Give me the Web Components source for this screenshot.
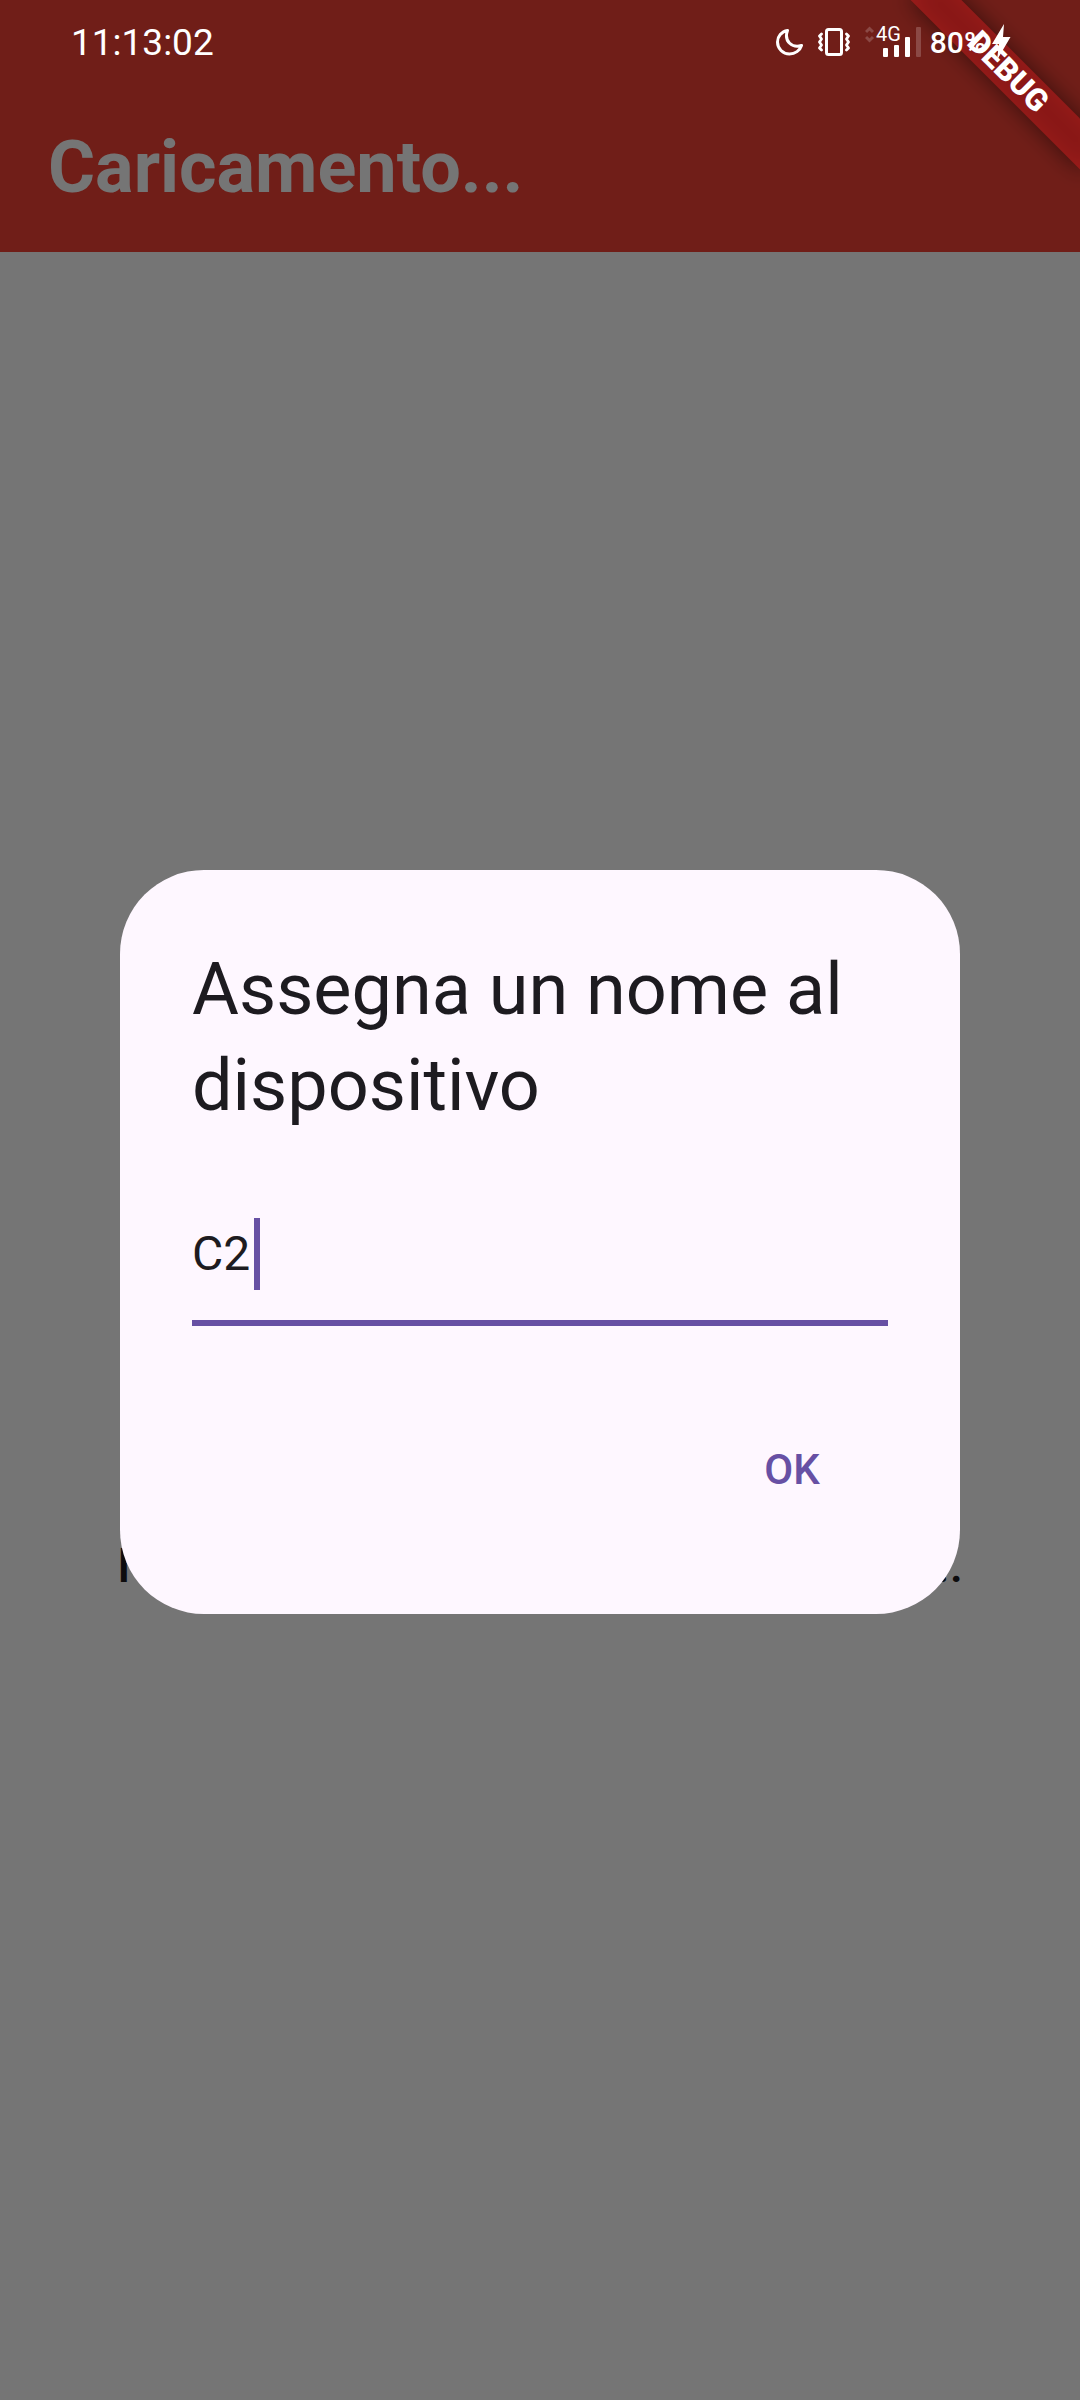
<!DOCTYPE html>
<html lang="it">
<head>
<meta charset="utf-8">
<title>Caricamento...</title>
<style>
  html, body { margin: 0; }
  body { font-family: Roboto, "Liberation Sans", sans-serif; background: #fff; }
</style>
</head>
<body>
<app-screen>
  <app-bar slot="bar">Caricamento...</app-bar>
  <loading-text></loading-text>
  <status-bar slot="overlay" time="11:13:02" battery="80%"></status-bar>
  <debug-banner slot="banner">DEBUG</debug-banner>
  <name-dialog slot="dialog" heading="Assegna un nome al dispositivo">
    <text-field value="C2" label="Nome del dispositivo"></text-field>
    <text-button slot="actions">OK</text-button>
  </name-dialog>
</app-screen>

<script>
const define = (name, render) => customElements.define(name, class extends HTMLElement {
  connectedCallback() {
    if (this.shadowRoot) return;
    this.attachShadow({ mode: "open" }).innerHTML = render(this);
  }
});

define("app-screen", () => `
  <style>
    :host { display: grid; min-height: 100vh; position: relative; overflow: hidden; }
    .page, .scrim { grid-area: 1 / 1; }
    .page { display: flex; flex-direction: column; }
    .body { flex: 1; display: flex; flex-direction: column; align-items: center; justify-content: center; padding-top: 480px; }
    .scrim { position: relative; background: rgba(0, 0, 0, .54); display: flex; align-items: center; justify-content: center; padding: 84px 120px 0; }
  </style>
  <div class="page"><slot name="bar"></slot><main class="body"><slot></slot></main></div>
  <div class="scrim"><slot name="dialog"></slot></div>
  <slot name="banner"></slot>
  <slot name="overlay"></slot>`);

define("app-bar", () => `
  <style>
    :host { display: block; background: #f44336; padding-top: 84px; }
    h1 { margin: 0; padding: 0 48px; font-size: 72px; line-height: 168px; font-weight: 700; color: #fff; }
  </style>
  <h1><slot></slot></h1>`);

define("loading-text", () => `
  <style>
    :host { display: flex; justify-content: space-between; width: calc(100% - 234px); font-size: 48px; line-height: 72px; font-weight: 500; color: #1d1b20; }
  </style>
  <span>I</span><span>...</span>`);

define("status-bar", el => `
  <style>
    :host { position: absolute; top: 0; left: 0; right: 0; height: 84px; box-sizing: border-box; padding: 0 69px 0 71px; display: flex; align-items: center; justify-content: space-between; color: #fff; }
    time { font-size: 37px; }
    .icons { display: flex; align-items: center; gap: 15px; }
    .battery { display: flex; align-items: center; gap: 6px; font-size: 30px; font-weight: 500; margin-left: -7px; }
    svg { display: block; fill: none; stroke: #fff; }
  </style>
  <time>${el.getAttribute("time")}</time>
  <div class="icons">
    <svg width="27" height="28" viewBox="0 0 27 28" stroke-width="3" stroke-linejoin="round"><path d="M11.5 2.5C5.500 3.500 1.500 8.500 1.500 14a12 12 0 0 0 12 12c5.500 0 10.500-3.500 12-8.500C16.500 20.500 7.500 13.500 11.500 2.500z"/></svg>
    <svg width="32" height="28" viewBox="0 0 32 28" stroke-width="3" stroke-linejoin="round" stroke-linecap="round"><rect x="8.500" y="1.500" width="15" height="25" rx="2"/><path stroke-width="2.800" d="M3.500 6 1.500 8l2 3-2 3 2 3-2 3 2 2M28.500 6l2 2-2 3 2 3-2 3 2 3-2 2"/></svg>
    <svg width="57" height="44" viewBox="0 -6 57 44"><path stroke="#8b4945" stroke-width="3" d="M1 6l3.500-3.500L8 6M1 11l3.500 3.500L8 11"/><text x="11" y="15" font-size="20" fill="#fff" stroke="none">4G</text><g fill="#fff" stroke="none"><rect x="18" y="22" width="5" height="9" rx="1"/><rect x="29" y="19" width="5" height="12" rx="1"/><rect x="40" y="11" width="5" height="20" rx="1"/><rect x="51" y="1" width="5" height="30" rx="1" fill="#8b4945"/></g></svg>
    <div class="battery"><span>${el.getAttribute("battery")}</span><svg width="19" height="36" viewBox="0 0 19 36"><path d="M12 0 0 20h7L5 36 18.500 13H11z" fill="#fff" stroke="none"/></svg></div>
  </div>`);

define("debug-banner", () => `
  <style>
    :host { position: absolute; top: 54px; right: -48px; width: 240px; height: 36px; display: grid; transform: rotate(45deg); pointer-events: none; }
    .shadow, .band { grid-area: 1 / 1; }
    .shadow { background: rgba(0, 0, 0, .5); filter: blur(11px); }
    .band { position: relative; background: rgba(183, 28, 28, .63); color: #fff; font-size: 31px; line-height: 36px; font-weight: 900; text-align: center; }
  </style>
  <div class="shadow"></div><div class="band"><slot></slot></div>`);

define("name-dialog", el => `
  <style>
    :host { display: block; flex: 1; background: #fef7ff; border-radius: 84px; padding: 72px; color: #1d1b20; }
    h2 { margin: 0 0 48px; font-size: 72px; line-height: 96px; font-weight: 400; }
    .actions { display: flex; justify-content: flex-end; margin-top: 72px; }
  </style>
  <section role="dialog" aria-labelledby="heading">
    <h2 id="heading">${el.getAttribute("heading")}</h2>
    <slot></slot>
    <div class="actions"><slot name="actions"></slot></div>
  </section>`);

define("text-field", el => `
  <style>
    :host { display: flex; height: 144px; box-sizing: border-box; padding: 36px 0 30px; border-bottom: 6px solid #6750a4; }
    input { field-sizing: content; font: 400 48px/72px Roboto, "Liberation Sans", sans-serif; height: 72px; padding: 0; margin: 0; border: 0; outline: 0; background: none; color: #1d1b20; }
    .caret { width: 6px; height: 72px; margin-left: 4px; background: #6750a4; }
  </style>
  <input type="text" value="${el.getAttribute("value")}" aria-label="${el.getAttribute("label")}"><span class="caret"></span>`);

define("text-button", () => `
  <style>
    :host { display: block; }
    button { min-width: 192px; height: 144px; padding: 0 36px; border: 0; background: none; color: #6750a4; font: 500 42px/60px Roboto, "Liberation Sans", sans-serif; }
  </style>
  <button type="button"><slot></slot></button>`);
</script>
</body>
</html>
